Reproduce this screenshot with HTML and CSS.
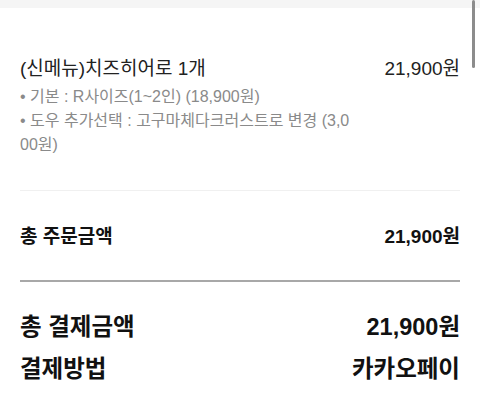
FILE: index.html
```html
<!DOCTYPE html>
<html lang="ko">
<head>
  <meta charset="UTF-8" />
  <meta name="viewport" content="width=device-width, initial-scale=1" />
  <title>주문 확인</title>
  <link rel="stylesheet" href="styles.css">
</head>
<body>
  <div class="top-band"></div>

  <!-- ordered item -->
  <section class="item">
    <div class="item-head">
      <span class="item-name">(신메뉴)치즈히어로 1개</span>
      <span class="item-price">21,900원</span>
    </div>
    <ul class="options">
      <li>• 기본 : R사이즈(1~2인) (18,900원)</li>
      <li>• 도우 추가선택 : 고구마체다크러스트로 변경 (3,000원)</li>
    </ul>
  </section>

  <!-- order total -->
  <section class="order-total">
    <span>총 주문금액</span>
    <span>21,900원</span>
  </section>

  <!-- payment summary -->
  <section class="payment">
    <div class="pay-row">
      <span>총 결제금액</span>
      <span>21,900원</span>
    </div>
    <div class="pay-row">
      <span>결제방법</span>
      <span>카카오페이</span>
    </div>
  </section>

  <div class="scrollbar"></div>
</body>
</html>
```

FILE: styles.css
```css
/* base page */
body {
  margin: 0;
  background: #fff;
  color: #222;
  font-family: "Liberation Sans", "Noto Sans CJK KR", sans-serif;
  position: relative;
  overflow: hidden;
}

/* gray strip left over from the section above */
.top-band {
  height: 8px;
  background: #f5f5f5;
}

/* item block */
.item {
  margin: 0 20px;
  padding: 49px 0 33px;
  border-bottom: 1px solid #f0f0f0;
}

.item-head {
  display: flex;
  justify-content: space-between;
  font-size: 19px;
  line-height: 24px;
  color: #222;
}

.options {
  list-style: none;
  margin: 4px 0 0;
  padding: 0;
  width: 336px;
  font-size: 16px;
  line-height: 24px;
  color: #8a8a8a;
  word-break: break-all;
}

/* total of the order */
.order-total {
  margin: 0 20px;
  padding: 34px 0 31px;
  border-bottom: 2px solid #a8a8a8;
  display: flex;
  justify-content: space-between;
  font-size: 19px;
  line-height: 24px;
  font-weight: bold;
  color: #111;
}

/* payment rows */
.payment {
  margin: 0 20px;
  padding-top: 30px;
  display: flex;
  flex-direction: column;
  gap: 12px;
}

.pay-row {
  display: flex;
  justify-content: space-between;
  font-size: 23.5px;
  line-height: 30px;
  font-weight: bold;
  color: #111;
}

/* scroll thumb drawn over the page */
.scrollbar {
  position: absolute;
  top: 0;
  right: 5px;
  width: 3px;
  height: 68px;
  background: #8c8c8c;
  border-radius: 2px;
}
```
